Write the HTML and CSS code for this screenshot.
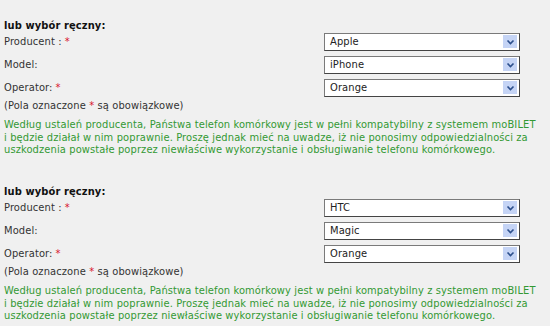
FILE: index.html
```html
<!DOCTYPE html>
<html lang="pl">
<head>
    <meta charset="utf-8">
    <link rel="stylesheet" href="styles.css">
</head>
<body>
    <div class="blok">
        <h3>lub wybór ręczny:</h3>
        <div class="wiersz">
            <span class="etykieta">Producent :<span class="gw">*</span></span>
            <div class="wybor"><span>Apple</span><span class="strzalka"><svg width="9" height="6" viewBox="0 0 9 6"><path d="M1.5 1.5 L4.5 4.5 L7.5 1.5" fill="none" stroke="#2c4f8c" stroke-width="1.6"/></svg></span></div>
        </div>
        <div class="wiersz">
            <span class="etykieta">Model:</span>
            <div class="wybor"><span>iPhone</span><span class="strzalka"><svg width="9" height="6" viewBox="0 0 9 6"><path d="M1.5 1.5 L4.5 4.5 L7.5 1.5" fill="none" stroke="#2c4f8c" stroke-width="1.6"/></svg></span></div>
        </div>
        <div class="wiersz">
            <span class="etykieta">Operator:<span class="gw">*</span></span>
            <div class="wybor"><span>Orange</span><span class="strzalka"><svg width="9" height="6" viewBox="0 0 9 6"><path d="M1.5 1.5 L4.5 4.5 L7.5 1.5" fill="none" stroke="#2c4f8c" stroke-width="1.6"/></svg></span></div>
        </div>
        <p class="uwaga">(Pola oznaczone <span class="gw">*</span> są obowiązkowe)</p>
        <p class="info">Według ustaleń producenta, Państwa telefon komórkowy jest w pełni kompatybilny z systemem moBILET<br>i będzie działał w nim poprawnie. Proszę jednak mieć na uwadze, iż nie ponosimy odpowiedzialności za<br>uszkodzenia powstałe poprzez niewłaściwe wykorzystanie i obsługiwanie telefonu komórkowego.</p>
    </div>

    <div class="blok">
        <h3>lub wybór ręczny:</h3>
        <div class="wiersz">
            <span class="etykieta">Producent :<span class="gw">*</span></span>
            <div class="wybor"><span>HTC</span><span class="strzalka"><svg width="9" height="6" viewBox="0 0 9 6"><path d="M1.5 1.5 L4.5 4.5 L7.5 1.5" fill="none" stroke="#2c4f8c" stroke-width="1.6"/></svg></span></div>
        </div>
        <div class="wiersz">
            <span class="etykieta">Model:</span>
            <div class="wybor"><span>Magic</span><span class="strzalka"><svg width="9" height="6" viewBox="0 0 9 6"><path d="M1.5 1.5 L4.5 4.5 L7.5 1.5" fill="none" stroke="#2c4f8c" stroke-width="1.6"/></svg></span></div>
        </div>
        <div class="wiersz">
            <span class="etykieta">Operator:<span class="gw">*</span></span>
            <div class="wybor"><span>Orange</span><span class="strzalka"><svg width="9" height="6" viewBox="0 0 9 6"><path d="M1.5 1.5 L4.5 4.5 L7.5 1.5" fill="none" stroke="#2c4f8c" stroke-width="1.6"/></svg></span></div>
        </div>
        <p class="uwaga">(Pola oznaczone <span class="gw">*</span> są obowiązkowe)</p>
        <p class="info">Według ustaleń producenta, Państwa telefon komórkowy jest w pełni kompatybilny z systemem moBILET<br>i będzie działał w nim poprawnie. Proszę jednak mieć na uwadze, iż nie ponosimy odpowiedzialności za<br>uszkodzenia powstałe poprzez niewłaściwe wykorzystanie i obsługiwanie telefonu komórkowego.</p>
    </div>
</body>
</html>
```

FILE: styles.css
```css
body {
    margin: 0;
    background-color: #f0f0f0;
    font-family: "DejaVu Sans Condensed", "DejaVu Sans", sans-serif;
    font-stretch: semi-condensed;
    font-size: 11px;
    letter-spacing: 0.12px;
    color: #333333;
}

.blok {
    box-sizing: border-box;
    padding: 21px 30px 0 4px;
    height: 166px;
}

h3 {
    margin: 0;
    font-size: 11px;
    font-weight: bold;
    color: #111111;
    line-height: 9px;
}

.wiersz {
    display: grid;
    grid-template-columns: 1fr 196px;
    align-items: center;
    height: 23px;
}

.gw {
    color: #d8102c;
    margin-left: 3px;
}

.uwaga .gw {
    margin-left: 0;
}

.wybor {
    height: 18px;
    box-sizing: border-box;
    border: 1px solid #7a7a7a;
    border-right-color: #444;
    border-bottom-color: #444;
    background-color: #ffffff;
    display: flex;
    align-items: center;
    justify-content: space-between;
    padding: 0 2px 0 5px;
    color: #222222;
}

.strzalka {
    width: 14px;
    height: 13px;
    background-color: #c5d4f5;
    display: flex;
    align-items: center;
    justify-content: center;
}

.uwaga {
    margin: 1px 0 0 0;
    line-height: 12px;
}

.info {
    margin: 7px 0 0 0;
    color: #339933;
    line-height: 12.5px;
    white-space: nowrap;
}
```
